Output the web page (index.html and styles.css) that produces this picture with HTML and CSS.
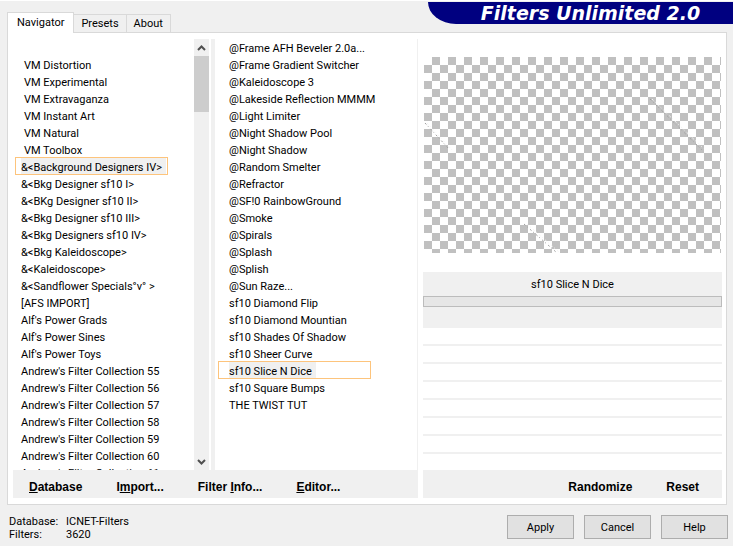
FILE: index.html
```html
<!DOCTYPE html>
<html lang="en">
<head>
<meta charset="utf-8">
<title>Filters Unlimited 2.0</title>
<link rel="stylesheet" href="styles.css">
</head>
<body>
<header class="top">
  <nav class="tabs" role="tablist">
    <button class="tab tab-active" role="tab" aria-selected="true">Navigator</button>
    <button class="tab" role="tab">Presets</button>
    <button class="tab" role="tab">About</button>
  </nav>
  <h1 class="banner">Filters Unlimited 2.0</h1>
</header>

<main class="panel">
  <section class="browser">
    <div class="lists">
      <ul class="list list-categories" role="listbox" aria-label="Categories">
        <li class="item"></li>
        <li class="item item-indent">VM Distortion</li>
        <li class="item item-indent">VM Experimental</li>
        <li class="item item-indent">VM Extravaganza</li>
        <li class="item item-indent">VM Instant Art</li>
        <li class="item item-indent">VM Natural</li>
        <li class="item item-indent">VM Toolbox</li>
        <li class="item item-selected"><span class="mark">&amp;&lt;Background Designers IV&gt;</span></li>
        <li class="item">&amp;&lt;Bkg Designer sf10 I&gt;</li>
        <li class="item">&amp;&lt;BKg Designer sf10 II&gt;</li>
        <li class="item">&amp;&lt;Bkg Designer sf10 III&gt;</li>
        <li class="item">&amp;&lt;Bkg Designers sf10 IV&gt;</li>
        <li class="item">&amp;&lt;Bkg Kaleidoscope&gt;</li>
        <li class="item">&amp;&lt;Kaleidoscope&gt;</li>
        <li class="item">&amp;&lt;Sandflower Specials°v° &gt;</li>
        <li class="item">[AFS IMPORT]</li>
        <li class="item">Alf's Power Grads</li>
        <li class="item">Alf's Power Sines</li>
        <li class="item">Alf's Power Toys</li>
        <li class="item">Andrew's Filter Collection 55</li>
        <li class="item">Andrew's Filter Collection 56</li>
        <li class="item">Andrew's Filter Collection 57</li>
        <li class="item">Andrew's Filter Collection 58</li>
        <li class="item">Andrew's Filter Collection 59</li>
        <li class="item">Andrew's Filter Collection 60</li>
        <li class="item">Andrew's Filter Collection 61</li>
      </ul>
      <div class="scrollbar">
        <button class="arrow" aria-label="Scroll up"><svg width="9" height="6" viewBox="0 0 9 6"><path d="M1 5 4.500 1.500 8 5" fill="none" stroke="#505050" stroke-width="2"/></svg></button>
        <div class="thumb"></div>
        <button class="arrow arrow-down" aria-label="Scroll down"><svg width="9" height="6" viewBox="0 0 9 6"><path d="M1 1 4.500 4.500 8 1" fill="none" stroke="#505050" stroke-width="2"/></svg></button>
      </div>
      <ul class="list list-filters" role="listbox" aria-label="Filters">
        <li class="item">@Frame AFH Beveler 2.0a...</li>
        <li class="item">@Frame Gradient Switcher</li>
        <li class="item">@Kaleidoscope 3</li>
        <li class="item">@Lakeside Reflection MMMM</li>
        <li class="item">@Light Limiter</li>
        <li class="item">@Night Shadow Pool</li>
        <li class="item">@Night Shadow</li>
        <li class="item">@Random Smelter</li>
        <li class="item">@Refractor</li>
        <li class="item">@SF!0 RainbowGround</li>
        <li class="item">@Smoke</li>
        <li class="item">@Spirals</li>
        <li class="item">@Splash</li>
        <li class="item">@Splish</li>
        <li class="item">@Sun Raze...</li>
        <li class="item">sf10 Diamond Flip</li>
        <li class="item">sf10 Diamond Mountian</li>
        <li class="item">sf10 Shades Of Shadow</li>
        <li class="item">sf10 Sheer Curve</li>
        <li class="item item-selected"><span class="mark">sf10 Slice N Dice</span></li>
        <li class="item">sf10 Square Bumps</li>
        <li class="item">THE TWIST TUT</li>
      </ul>
    </div>
    <div class="toolbar">
      <button class="command"><u>D</u>atabase</button>
      <button class="command">I<u>m</u>port...</button>
      <button class="command">Filter <u>I</u>nfo...</button>
      <button class="command"><u>E</u>ditor...</button>
    </div>
  </section>

  <section class="detail">
    <div class="preview">
      <svg class="scratches" viewBox="0 0 297 196" preserveAspectRatio="none" aria-hidden="true">
        <g fill="none" stroke-width="1" stroke-dasharray="2 2 1 3">
          <path d="M1 66 25 92M226 42 278 93M100 167 132 195" stroke="#a0a0a0"/>
          <path d="M3 66 28 93M228 42 280 92M103 167 135 195" stroke="#f4f4f4"/>
        </g>
      </svg>
    </div>
    <div class="current">
      <p class="current-name">sf10 Slice N Dice</p>
      <div class="progress"></div>
    </div>
    <div class="slots">
      <div class="slot"></div><div class="slot"></div><div class="slot"></div><div class="slot"></div><div class="slot"></div><div class="slot"></div><div class="slot"></div>
    </div>
    <div class="toolbar toolbar-end">
      <button class="command">Randomize</button>
      <button class="command">Reset</button>
    </div>
  </section>
</main>

<footer class="bottom">
  <dl class="status">
    <dt>Database:</dt><dd>ICNET-Filters</dd>
    <dt>Filters:</dt><dd>3620</dd>
  </dl>
  <div class="actions">
    <button class="push">Apply</button>
    <button class="push">Cancel</button>
    <button class="push">Help</button>
  </div>
</footer>
</body>
</html>
```
FILE: styles.css
```css
* { box-sizing: border-box; }

body {
  margin: 0;
  min-height: 100vh;
  display: flex;
  flex-direction: column;
  border-top: 1px solid #fff;
  background: #f0f0f0;
  color: #000;
  font: 11px/17px Roboto, "Liberation Sans", sans-serif;
}

button {
  margin: 0;
  padding: 0;
  border: 0;
  background: none;
  color: inherit;
  font: inherit;
}

ul, dl, dd, p, h1 { margin: 0; padding: 0; }
ul { list-style: none; }

.top {
  display: flex;
  justify-content: space-between;
  align-items: flex-start;
  height: 31px;
  padding-left: 7px;
}

.tabs {
  display: flex;
  align-items: flex-end;
  height: 32px;
  padding-top: 11px;
}

.tab {
  height: 19px;
  padding: 0 7px;
  border: 1px solid #d9d9d9;
  border-left: 0;
}

.tab-active {
  z-index: 1;
  height: 21px;
  padding: 0 9px 2px;
  border-left: 1px solid #d9d9d9;
  border-bottom: 0;
  background: #fff;
}

.banner {
  width: 305px;
  margin-top: 1px;
  padding-left: 20px;
  border-bottom-left-radius: 28px 22px;
  background: #000080;
  color: #fff;
  font: italic bold 19px/22px "DejaVu Sans", sans-serif;
  text-align: center;
}

.panel {
  flex: 1;
  display: grid;
  grid-template-columns: 405fr 299fr;
  column-gap: 5px;
  margin: 0 6px 0 7px;
  padding: 6px 4px 6px 5px;
  border: 1px solid #d9d9d9;
  background: #fff;
}

.browser, .detail {
  display: flex;
  flex-direction: column;
  min-width: 0;
}

.browser { border-right: 1px solid #f0f0f0; }

.lists {
  flex: 1 0 431px;
  display: grid;
  grid-template-columns: 181fr 15px 208fr;
  height: 431px;
  overflow: hidden;
}

.list {
  height: 431px;
  overflow: hidden;
  line-height: 19px;
  white-space: nowrap;
}

.list-categories { padding-left: 2px; }

.list-filters {
  margin-left: 2px;
  padding-left: 3px;
  border-left: 4px solid #f0f0f0;
}

.item {
  height: 17px;
  padding-left: 6px;
}

.list-filters .item { padding-left: 11px; }
.list-categories .item-indent { padding-left: 9px; }

.item-selected {
  width: 153px;
  height: 18px;
  margin-top: -1px;
  border: 1px solid #fdc47c;
}

.list-categories .item-selected { padding-left: 5px; }
.list-filters .item-selected { padding-left: 10px; }

.mark {
  display: block;
  width: max-content;
  height: 16px;
  padding-right: 4px;
  background: #f0f0f0;
}

.scrollbar {
  display: flex;
  flex-direction: column;
  background: #f0f0f0;
}

.arrow {
  display: grid;
  place-items: center;
  height: 17px;
}

.arrow-down { margin-top: auto; }

.thumb {
  height: 56px;
  background: #cdcdcd;
}

.toolbar {
  display: flex;
  align-items: center;
  gap: 34px;
  height: 28px;
  padding: 6px 16px 0;
  background: #f0f0f0;
}

.toolbar-end {
  justify-content: flex-end;
  padding-right: 23px;
}

.command {
  font: bold 12px/16px "Liberation Sans", sans-serif;
  white-space: nowrap;
}

.preview {
  height: 196px;
  margin: 18px 1px 19px;
  background: conic-gradient(#c0c0c0 25%, #fff 0 50%, #c0c0c0 0 75%, #fff 0) 0 0 / 16px 16px;
}

.scratches {
  display: block;
  width: 100%;
  height: 100%;
}

.current {
  height: 56px;
  padding-top: 3px;
  background: #f0f0f0;
}

.current-name {
  height: 21px;
  line-height: 19px;
  text-align: center;
}

.progress {
  height: 11px;
  border: 1px solid #bcbcbc;
  background: #e6e6e6;
}

.slots {
  flex: 1;
  padding-bottom: 16px;
}

.slot {
  height: 18px;
  border-bottom: 2px solid #f0f0f0;
}

.bottom {
  display: flex;
  justify-content: space-between;
  padding: 10px 5px 8px 9px;
}

.status {
  display: grid;
  grid-template-columns: 57px auto;
  line-height: 13px;
  align-content: start;
}

.actions {
  display: flex;
  gap: 10px;
}

.push {
  width: 67px;
  height: 24px;
  border: 1px solid #adadad;
  background: #e1e1e1;
}
```
